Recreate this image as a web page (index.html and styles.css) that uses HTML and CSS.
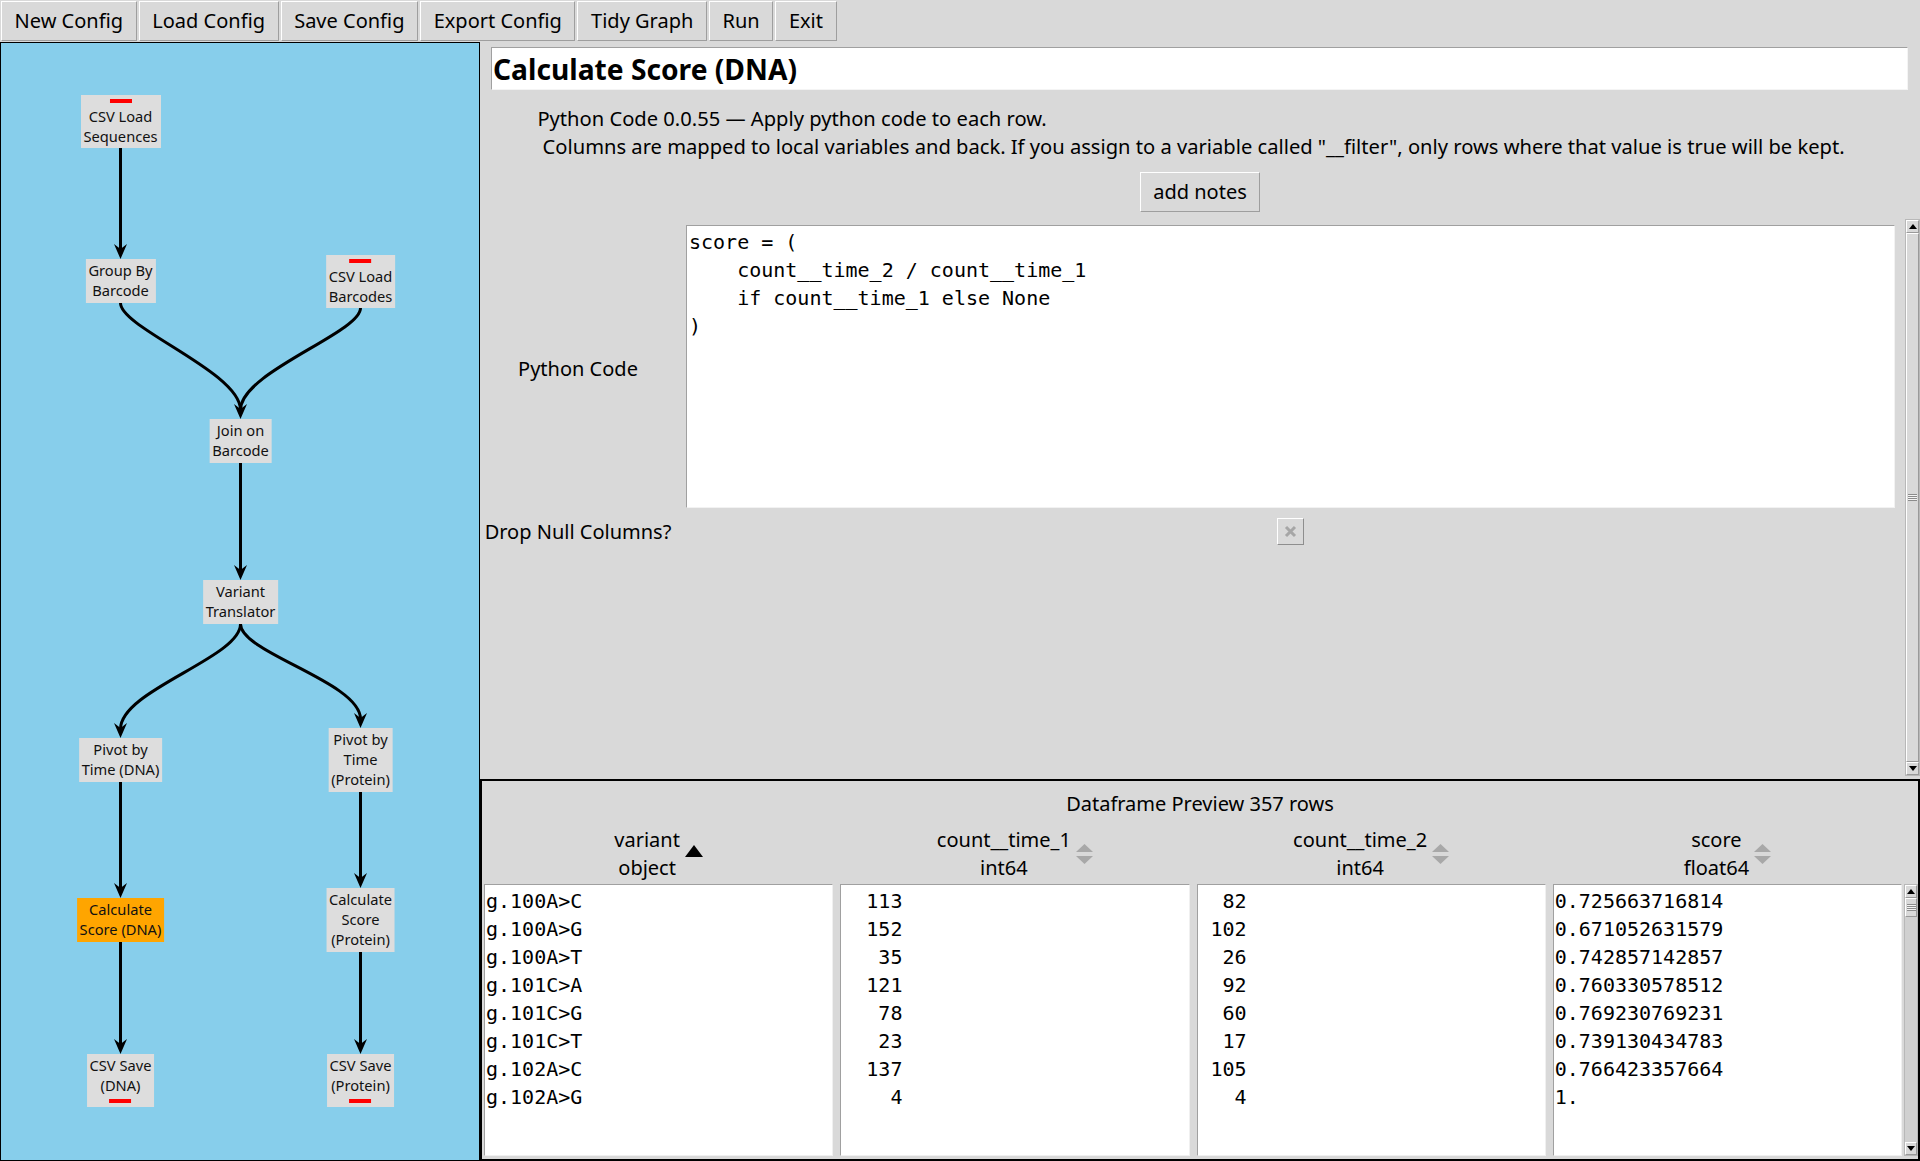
FILE: index.html
```html
<!DOCTYPE html>
<html>
<head>
<meta charset="utf-8">
<title>Pipeline Config</title>
<link rel="stylesheet" href="styles.css">
</head>
<body>
<div class="app">
  <div class="toolbar">
    <button class="btn">New Config</button>
    <button class="btn">Load Config</button>
    <button class="btn">Save Config</button>
    <button class="btn">Export Config</button>
    <button class="btn">Tidy Graph</button>
    <button class="btn">Run</button>
    <button class="btn">Exit</button>
  </div>
  <div class="main">
    <div class="graph">
      <svg class="edges" width="478" height="1117" viewBox="1 43 478 1117">
        <g fill="none" stroke="#000" stroke-width="3">
          <path d="M120.5 148 V250"/>
          <path d="M120.5 303 C120.5 328 240.5 372 240.5 410"/>
          <path d="M360.5 308 C360.5 333 240.5 372 240.5 410"/>
          <path d="M240.5 463 V571"/>
          <path d="M240.5 624 C240.5 658 120.5 690 120.5 729"/>
          <path d="M240.5 624 C240.5 653 360.5 682 360.5 719"/>
          <path d="M120.5 782 V889"/>
          <path d="M360.5 792 V879"/>
          <path d="M120.5 942 V1045"/>
          <path d="M360.5 952 V1045"/>
        </g>
        <g fill="#000">
          <polygon points="120.5,259 114,244 120.5,249 127,244"/>
          <polygon points="240.5,419 234,404 240.5,409 247,404"/>
          <polygon points="240.5,580 234,565 240.5,570 247,565"/>
          <polygon points="120.5,738 114,723 120.5,728 127,723"/>
          <polygon points="360.5,728 354,713 360.5,718 367,713"/>
          <polygon points="120.5,898 114,883 120.5,888 127,883"/>
          <polygon points="360.5,888 354,873 360.5,878 367,873"/>
          <polygon points="120.5,1054 114,1039 120.5,1044 127,1039"/>
          <polygon points="360.5,1054 354,1039 360.5,1044 367,1039"/>
        </g>
      </svg>
      <div class="node src n-seq"><div class="bar"></div>CSV Load<br>Sequences</div>
      <div class="node n-group">Group By<br>Barcode</div>
      <div class="node src n-bar"><div class="bar"></div>CSV Load<br>Barcodes</div>
      <div class="node n-join">Join on<br>Barcode</div>
      <div class="node n-var">Variant<br>Translator</div>
      <div class="node n-pdna">Pivot by<br>Time (DNA)</div>
      <div class="node n-pprot">Pivot by<br>Time<br>(Protein)</div>
      <div class="node active n-cdna">Calculate<br>Score (DNA)</div>
      <div class="node n-cprot">Calculate<br>Score<br>(Protein)</div>
      <div class="node sink n-sdna">CSV Save<br>(DNA)<div class="bar"></div></div>
      <div class="node sink n-sprot">CSV Save<br>(Protein)<div class="bar"></div></div>
    </div>
    <div class="right">
      <div class="options">
        <div class="title">Calculate Score (DNA)</div>
        <div class="desc"><div class="desc-text">Python Code 0.0.55 — Apply python code to each row.
 Columns are mapped to local variables and back. If you assign to a variable called "__filter", only rows where that value is true will be kept.</div></div>
        <div class="notes-row"><button class="btn">add notes</button></div>
        <div class="fields">
          <div class="field-grid">
            <div class="flabel flabel-code">Python Code</div>
            <div class="code">score = (
    count__time_2 / count__time_1
    if count__time_1 else None
)</div>
            <div class="flabel flabel-check">Drop Null Columns?</div>
            <div class="check">
              <svg width="13" height="13" viewBox="0 0 13 13"><path d="M2 2 L11 11 M11 2 L2 11" stroke="#a6a6a6" stroke-width="3" fill="none"/></svg>
            </div>
          </div>
          <div class="sb sb-options">
            <div class="sb-btn"><svg width="8" height="5" viewBox="0 0 8 5"><polygon points="4,0 8,5 0,5" fill="#000"/></svg></div>
            <div class="sb-thumb full"><div class="grip"></div></div>
            <div class="sb-btn"><svg width="8" height="5" viewBox="0 0 8 5"><polygon points="0,0 8,0 4,5" fill="#000"/></svg></div>
          </div>
        </div>
      </div>
      <div class="preview">
        <div class="preview-title">Dataframe Preview 357 rows</div>
        <div class="table">
          <div class="cols">
            <div class="colhead">
              <div class="colhead-text">variant<br>object</div>
              <svg class="sort-active" width="18" height="12" viewBox="0 0 18 12"><polygon points="9,0 18,12 0,12" fill="#000"/></svg>
            </div>
            <div class="colhead">
              <div class="colhead-text">count__time_1<br>int64</div>
              <svg width="17" height="20" viewBox="0 0 17 20"><polygon points="8.5,0 17,8 0,8" fill="#a8a8a8"/><polygon points="0,12 17,12 8.5,20" fill="#a8a8a8"/></svg>
            </div>
            <div class="colhead">
              <div class="colhead-text">count__time_2<br>int64</div>
              <svg width="17" height="20" viewBox="0 0 17 20"><polygon points="8.5,0 17,8 0,8" fill="#a8a8a8"/><polygon points="0,12 17,12 8.5,20" fill="#a8a8a8"/></svg>
            </div>
            <div class="colhead">
              <div class="colhead-text">score<br>float64</div>
              <svg width="17" height="20" viewBox="0 0 17 20"><polygon points="8.5,0 17,8 0,8" fill="#a8a8a8"/><polygon points="0,12 17,12 8.5,20" fill="#a8a8a8"/></svg>
            </div>
            <div class="colbody">g.100A&gt;C
g.100A&gt;G
g.100A&gt;T
g.101C&gt;A
g.101C&gt;G
g.101C&gt;T
g.102A&gt;C
g.102A&gt;G</div>
            <div class="colbody">  113
  152
   35
  121
   78
   23
  137
    4</div>
            <div class="colbody">  82
 102
  26
  92
  60
  17
 105
   4</div>
            <div class="colbody">0.725663716814
0.671052631579
0.742857142857
0.760330578512
0.769230769231
0.739130434783
0.766423357664
1.</div>
          </div>
          <div class="sb sb-table">
            <div class="sb-btn"><svg width="8" height="5" viewBox="0 0 8 5"><polygon points="4,0 8,5 0,5" fill="#000"/></svg></div>
            <div class="sb-track">
              <div class="sb-thumb small"><div class="grip"></div></div>
            </div>
            <div class="sb-btn"><svg width="8" height="5" viewBox="0 0 8 5"><polygon points="0,0 8,0 4,5" fill="#000"/></svg></div>
          </div>
        </div>
      </div>
    </div>
  </div>
</div>
</body>
</html>
```

FILE: styles.css
```css
* { box-sizing: border-box; }
html, body { margin: 0; padding: 0; }
body {
  width: 1920px;
  height: 1161px;
  overflow: hidden;
  background: #d9d9d9;
  font-family: "Noto Sans", "DejaVu Sans", sans-serif;
  font-size: 20px;
  color: #000;
}
.app { display: flex; flex-direction: column; height: 1161px; }

/* toolbar */
.toolbar {
  display: flex;
  gap: 2px;
  padding: 1px 0 0 1px;
  height: 42px;
  align-items: flex-start;
  flex: none;
}
.btn {
  font: inherit;
  color: #000;
  height: 40px;
  padding: 0 12.6px;
  line-height: 38px;
  background: #d9d9d9;
  border: 1px solid;
  border-color: #ffffff #9e9e9e #9e9e9e #ffffff;
  margin: 0;
}

.main { display: flex; flex: 1; min-height: 0; }

/* graph canvas */
.graph {
  position: relative;
  flex: none;
  width: 480px;
  height: 1119px;
  background: #87ceeb;
  border: 1px solid #000;
}
.edges { position: absolute; left: 0; top: 0; }
.node {
  position: absolute;
  transform: translateX(-50%);
  background: #dddddd;
  font-size: 14.67px;
  line-height: 20px;
  padding: 1px 3px 3px;
  text-align: center;
  white-space: nowrap;
  color: #111;
}
.node .bar { width: 22px; height: 4px; background: #ff0000; margin: 0 auto 3px; }
.node.src { padding-top: 4px; padding-bottom: 2px; }
.node.sink { padding-top: 1px; padding-bottom: 4px; }
.node.sink .bar { margin: 4px auto 0; }
.node.active { background: #ffa500; }

.n-seq   { left: 119.5px; top: 52px; }
.n-group { left: 119.5px; top: 216px; }
.n-bar   { left: 359.5px; top: 212px; }
.n-join  { left: 239.5px; top: 376px; }
.n-var   { left: 239.5px; top: 537px; }
.n-pdna  { left: 119.5px; top: 695px; }
.n-pprot { left: 359.5px; top: 685px; }
.n-cdna  { left: 119.5px; top: 855px; }
.n-cprot { left: 359.5px; top: 845px; }
.n-sdna  { left: 119.5px; top: 1011px; }
.n-sprot { left: 359.5px; top: 1011px; }

/* right side */
.right { flex: 1; display: flex; flex-direction: column; min-width: 0; }
.options { height: 737px; display: flex; flex-direction: column; flex: none; }
.title {
  margin: 5px 12px 0 11px;
  height: 43px;
  background: #fff;
  border: 1px solid;
  border-color: #a0a0a0 #f4f4f4 #f4f4f4 #a0a0a0;
  font-weight: 700;
  font-size: 28.2px;
  line-height: 42px;
  padding-left: 1px;
  white-space: nowrap;
}
.desc { margin-top: 14px; text-align: center; padding-right: 18px; }
.desc-text {
  display: inline-block;
  text-align: left;
  white-space: pre;
  line-height: 28px;
  font-size: 20.15px;
}
.notes-row { margin-top: 12px; text-align: center; }

.fields { margin-top: 7px; flex: 1; display: flex; min-height: 0; }
.field-grid {
  flex: 1;
  display: grid;
  grid-template-columns: 196px 1fr;
  align-content: start;
}
.flabel { text-align: center; align-self: center; white-space: nowrap; }
.flabel-code { margin-top: 10px; }
.flabel-check { margin-top: 10px; }
.code {
  margin: 6px 10px 0;
  height: 283px;
  background: #fff;
  border: 1px solid;
  border-color: #a0a0a0 #f2f2f2 #f2f2f2 #a0a0a0;
  font-family: "DejaVu Sans Mono", "Liberation Mono", monospace;
  font-size: 20px;
  line-height: 28px;
  padding: 2px 2px 0;
  white-space: pre;
  color: #000;
}
.check {
  margin-top: 10px;
  justify-self: center;
  width: 27px;
  height: 27px;
  border: 1px solid;
  border-color: #ffffff #8e8e8e #8e8e8e #ffffff;
  background: #d9d9d9;
  display: flex;
  align-items: center;
  justify-content: center;
}

/* scrollbars */
.sb {
  flex: none;
  width: 15px;
  display: flex;
  flex-direction: column;
  background: #d0d0d0;
  border: 1px solid #b8b8b8;
}
.sb-options { margin-bottom: 3px; }
.sb-btn {
  flex: none;
  height: 13px;
  display: flex;
  align-items: center;
  justify-content: center;
  background: #d9d9d9;
  border: 1px solid;
  border-color: #ffffff #9a9a9a #9a9a9a #ffffff;
}
.sb-track { flex: 1; }
.sb-thumb {
  background: #d9d9d9;
  border: 1px solid;
  border-color: #ffffff #9a9a9a #9a9a9a #ffffff;
  display: flex;
  align-items: center;
  justify-content: center;
}
.sb-thumb.full { flex: 1; }
.sb-thumb.small { height: 19px; }
.grip {
  width: 9px;
  height: 7px;
  background: repeating-linear-gradient(to bottom, #8c8c8c 0 1px, #f4f4f4 1px 2px);
}

/* preview */
.preview {
  flex: 1;
  border: 2px solid #000;
  display: flex;
  flex-direction: column;
  min-height: 0;
}
.preview-title { text-align: center; line-height: 28px; padding-top: 9px; }
.table { display: flex; margin-top: 7px; padding-left: 2px; }
.cols {
  flex: 1;
  display: grid;
  grid-template-columns: repeat(4, 1fr);
  grid-template-rows: 56px 272px;
  column-gap: 7px;
  row-gap: 3px;
}
.colhead {
  display: flex;
  justify-content: center;
  align-items: center;
  gap: 5px;
  padding-top: 2px;
}
.colhead-text { text-align: center; line-height: 28px; white-space: nowrap; }
.sort-active { margin-bottom: 6px; }
.colbody {
  background: #fff;
  border: 1px solid;
  border-color: #a0a0a0 #f0f0f0 #f0f0f0 #a0a0a0;
  font-family: "DejaVu Sans Mono", "Liberation Mono", monospace;
  font-size: 20px;
  line-height: 28px;
  padding: 2px 1px 0;
  white-space: pre;
  overflow: hidden;
}
.sb-table {
  margin-left: 2px;
  width: 14px;
  height: 272px;
  align-self: flex-end;
}
```
